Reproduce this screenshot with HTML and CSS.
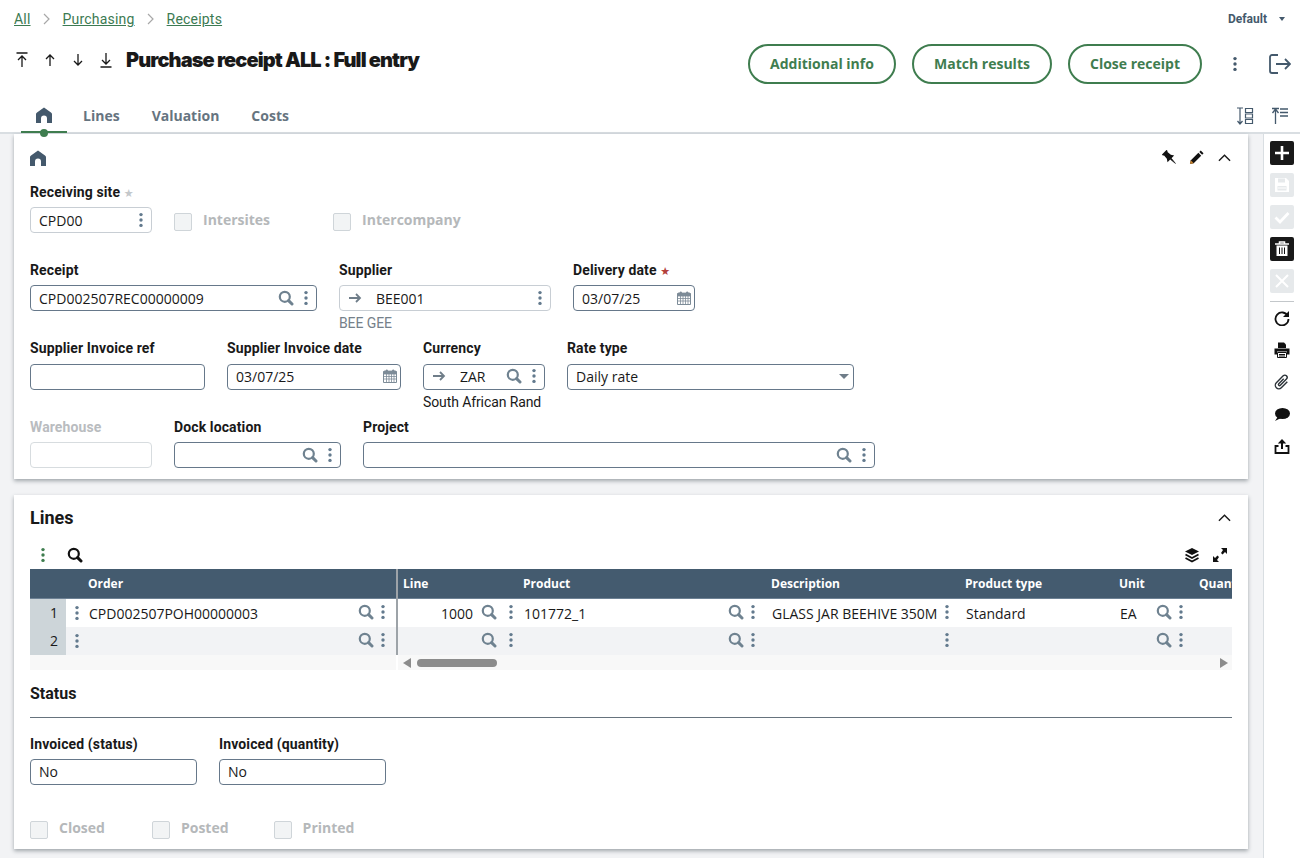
FILE: index.html
```html
<!DOCTYPE html>
<html lang="en">

<head>
    <meta charset="UTF-8" />
    <title>Purchase receipt ALL : Full entry</title>
    <link rel="stylesheet" href="styles.css">
</head>

<body>
    <svg class="sprite" width="0" height="0">
        <symbol id="i-search" viewBox="0 0 16 16">
            <circle cx="6.8" cy="6.8" r="5" fill="none" stroke="currentColor" stroke-width="2.2" />
            <path d="M10.6 10.6 14 14" stroke="currentColor" stroke-width="3" stroke-linecap="round" />
        </symbol>
        <symbol id="i-dots" viewBox="0 0 6 16">
            <circle cx="3" cy="2.6" r="1.7" fill="currentColor" />
            <circle cx="3" cy="8" r="1.7" fill="currentColor" />
            <circle cx="3" cy="13.4" r="1.7" fill="currentColor" />
        </symbol>
        <symbol id="i-home" viewBox="0 0 16 16">
            <path d="M8 0.5 15 5.5c.6.5 1 1 1 2V16h-5v-4.5a3 3 0 0 0-6 0V16H0V7.5c0-1 .4-1.5 1-2Z" fill="currentColor" />
        </symbol>
        <symbol id="i-cal" viewBox="0 0 14 14">
            <path d="M0.5 2.5h13v11h-13Z" fill="#fff" stroke="currentColor" />
            <path d="M1 2h12v3H1ZM3 1h1.5v2H3ZM9.5 1H11v2H9.5ZM3.5 5v8M6 5v8M8.5 5v8M11 5v8M1 7.5h12M1 10h12" fill="currentColor" stroke="currentColor" stroke-width=".8" />
        </symbol>
        <symbol id="i-right" viewBox="0 0 14 12">
            <path d="M1 6h11M8 2l4 4-4 4" fill="none" stroke="currentColor" stroke-width="1.8" />
        </symbol>
    </svg>

    <header class="top">
        <div class="crumb-row">
            <nav class="crumbs">
                <a>All</a>
                <svg class="crumb-sep" viewBox="0 0 8 12"><path d="M1 1l5 5-5 5" fill="none" stroke="currentColor" stroke-width="1.2" /></svg>
                <a>Purchasing</a>
                <svg class="crumb-sep" viewBox="0 0 8 12"><path d="M1 1l5 5-5 5" fill="none" stroke="currentColor" stroke-width="1.2" /></svg>
                <a>Receipts</a>
            </nav>
            <div class="view-pick">Default<span class="caret"></span></div>
        </div>

        <div class="title-row">
            <div class="nav-arrows">
                <svg viewBox="0 0 12 16"><path d="M0.5 1h11M6 15V4M2 8l4-4 4 4" fill="none" stroke="currentColor" stroke-width="1.3" /></svg>
                <svg viewBox="0 0 12 16"><path d="M6 14V3M2 7l4-4 4 4" fill="none" stroke="currentColor" stroke-width="1.3" /></svg>
                <svg viewBox="0 0 12 16"><path d="M6 2v11M2 9l4 4 4-4" fill="none" stroke="currentColor" stroke-width="1.3" /></svg>
                <svg viewBox="0 0 12 16"><path d="M0.5 15h11M6 1v11M2 8l4 4 4-4" fill="none" stroke="currentColor" stroke-width="1.3" /></svg>
            </div>
            <h1>Purchase receipt ALL : Full entry</h1>
            <div class="actions">
                <button class="pill pill-a">Additional info</button>
                <button class="pill pill-b">Match results</button>
                <button class="pill pill-c">Close receipt</button>
                <svg class="more"><use href="#i-dots" /></svg>
                <svg class="logout" viewBox="0 0 22 20"><path d="M9 1H3a2 2 0 0 0-2 2v14a2 2 0 0 0 2 2h6M7 10h14M16 5l5 5-5 5" fill="none" stroke="currentColor" stroke-width="1.8" /></svg>
            </div>
        </div>

        <div class="tab-row">
            <div class="tab tab-on"><svg class="tab-home"><use href="#i-home" /></svg></div>
            <div class="tab">Lines</div>
            <div class="tab">Valuation</div>
            <div class="tab">Costs</div>
            <div class="tab-tools">
                <svg viewBox="0 0 18 18"><path d="M1 1h6M4 1v16M1.5 14 4 17l2.5-3M9.5 1.5h7v4h-7ZM9.5 7h7v4h-7ZM9.5 12.5h7v4h-7Z" fill="none" stroke="currentColor" stroke-width="1.2" /></svg>
                <svg viewBox="0 0 18 18"><path d="M1 1.5h7M4.5 17V2M1.5 6l3-4 3 4M9 2h8M9 5.5h8M9 9h8" fill="none" stroke="currentColor" stroke-width="1.3" /></svg>
            </div>
        </div>
    </header>

    <div class="workspace">
        <main class="content">
            <section class="card card-main">
                <div class="card-head">
                    <svg class="sec-home"><use href="#i-home" /></svg>
                    <div class="card-tools">
                        <svg class="pin" viewBox="0 0 16 16"><g transform="rotate(-45 8 8)"><path d="M4.5 0h7v2h-1l.5 5 2 3H3l2-3 .5-5h-1Z" fill="#111" /><path d="M7.2 10h1.6L8 17Z" fill="#111" stroke="#111" stroke-width=".6" /></g></svg>
                        <svg viewBox="0 0 16 16"><path d="M1 15l1-4 8-8 3 3-8 8Z" fill="#111" /><path d="M11 2l1.5-1.5 3 3L14 5Z" fill="#111" /><path d="M1 15l1-4 3 3Z" fill="#c9822c" /></svg>
                        <svg class="chev" viewBox="0 0 14 8"><path d="M1 7l6-6 6 6" fill="none" stroke="currentColor" stroke-width="1.5" /></svg>
                    </div>
                </div>

                <div class="form-row">
                    <div class="field w122">
                        <label>Receiving site <span class="star star-off">★</span></label>
                        <div class="input input-soft"><span class="val">CPD00</span><svg class="dots"><use href="#i-dots" /></svg></div>
                    </div>
                    <label class="check check-intersites"><span class="box"></span>Intersites</label>
                    <label class="check check-intercompany"><span class="box"></span>Intercompany</label>
                </div>

                <div class="form-row form-row-tall">
                    <div class="field w287">
                        <label>Receipt</label>
                        <div class="input"><span class="val">CPD002507REC00000009</span><svg class="search"><use href="#i-search" /></svg><svg class="dots"><use href="#i-dots" /></svg></div>
                    </div>
                    <div class="field w212">
                        <label>Supplier</label>
                        <div class="input input-soft"><svg class="go"><use href="#i-right" /></svg><span class="val">BEE001</span><svg class="dots"><use href="#i-dots" /></svg></div>
                        <div class="sub sub-grey">BEE GEE</div>
                    </div>
                    <div class="field w122">
                        <label>Delivery date <span class="star">★</span></label>
                        <div class="input"><span class="val">03/07/25</span><svg class="cal"><use href="#i-cal" /></svg></div>
                    </div>
                </div>

                <div class="form-row form-row-snug">
                    <div class="field w175">
                        <label>Supplier Invoice ref</label>
                        <div class="input"></div>
                    </div>
                    <div class="field w174">
                        <label>Supplier Invoice date</label>
                        <div class="input"><span class="val">03/07/25</span><svg class="cal"><use href="#i-cal" /></svg></div>
                    </div>
                    <div class="field w122">
                        <label>Currency</label>
                        <div class="input"><svg class="go"><use href="#i-right" /></svg><span class="val">ZAR</span><svg class="search"><use href="#i-search" /></svg><svg class="dots"><use href="#i-dots" /></svg></div>
                        <div class="sub">South African Rand</div>
                    </div>
                    <div class="field w287">
                        <label>Rate type</label>
                        <div class="input"><span class="val">Daily rate</span><span class="caret caret-select"></span></div>
                    </div>
                </div>

                <div class="form-row form-row-last">
                    <div class="field w122">
                        <label class="label-off">Warehouse</label>
                        <div class="input input-off"></div>
                    </div>
                    <div class="field w167">
                        <label>Dock location</label>
                        <div class="input"><span class="val"></span><svg class="search"><use href="#i-search" /></svg><svg class="dots"><use href="#i-dots" /></svg></div>
                    </div>
                    <div class="field w512">
                        <label>Project</label>
                        <div class="input"><span class="val"></span><svg class="search"><use href="#i-search" /></svg><svg class="dots"><use href="#i-dots" /></svg></div>
                    </div>
                </div>
            </section>

            <section class="card card-lines">
                <div class="lines-head">
                    <h2>Lines</h2>
                    <svg class="chev" viewBox="0 0 14 8"><path d="M1 7l6-6 6 6" fill="none" stroke="currentColor" stroke-width="1.5" /></svg>
                </div>
                <div class="grid-tools">
                    <svg class="dots dots-green"><use href="#i-dots" /></svg>
                    <svg class="search search-black"><use href="#i-search" /></svg>
                    <div class="grid-tools-right">
                        <svg viewBox="0 0 16 16"><path d="M8 1 15 4.5 8 8 1 4.5Z" fill="#111" /><path d="M1.5 7.5 8 11l6.5-3.5M1.5 11 8 14.5 14.5 11" fill="none" stroke="#111" stroke-width="1.8" /></svg>
                        <svg viewBox="0 0 16 16"><path d="M9 1h6v6l-2-2-2.5 2.5-1.5-1.5L11 3ZM7 15H1V9l2 2 2.5-2.5 1.5 1.5L5 13Z" fill="#111" /></svg>
                    </div>
                </div>

                <div class="grid">
                    <div class="frozen">
                        <div class="g-head"><span class="g-order">Order</span></div>
                        <div class="g-row">
                            <div class="g-num">1</div>
                            <svg class="dots"><use href="#i-dots" /></svg>
                            <span class="g-order-val">CPD002507POH00000003</span>
                            <svg class="search"><use href="#i-search" /></svg>
                            <svg class="dots dots-up"><use href="#i-dots" /></svg>
                        </div>
                        <div class="g-row g-row-alt">
                            <div class="g-num">2</div>
                            <svg class="dots"><use href="#i-dots" /></svg>
                            <span class="g-order-val"></span>
                            <svg class="search"><use href="#i-search" /></svg>
                            <svg class="dots dots-up"><use href="#i-dots" /></svg>
                        </div>
                        <div class="g-scroll"></div>
                    </div>
                    <div class="scroller">
                        <div class="g-head cols">
                            <span>Line</span><span>Product</span><span>Description</span><span>Product type</span><span>Unit</span><span>Quantity</span>
                        </div>
                        <div class="g-row cols">
                            <div class="cell cell-line"><span class="num">1000</span><svg class="search"><use href="#i-search" /></svg><svg class="dots dots-up"><use href="#i-dots" /></svg></div>
                            <div class="cell"><span class="txt">101772_1</span><svg class="search"><use href="#i-search" /></svg><svg class="dots dots-up"><use href="#i-dots" /></svg></div>
                            <div class="cell"><span class="txt">GLASS JAR BEEHIVE 350M</span><svg class="dots dots-up"><use href="#i-dots" /></svg></div>
                            <div class="cell"><span class="txt">Standard</span></div>
                            <div class="cell"><span class="txt">EA</span><svg class="search"><use href="#i-search" /></svg><svg class="dots dots-up"><use href="#i-dots" /></svg></div>
                            <div class="cell"></div>
                        </div>
                        <div class="g-row g-row-alt cols">
                            <div class="cell cell-line"><span class="num"></span><svg class="search"><use href="#i-search" /></svg><svg class="dots dots-up"><use href="#i-dots" /></svg></div>
                            <div class="cell"><span class="txt"></span><svg class="search"><use href="#i-search" /></svg><svg class="dots dots-up"><use href="#i-dots" /></svg></div>
                            <div class="cell"><span class="txt"></span><svg class="dots dots-up"><use href="#i-dots" /></svg></div>
                            <div class="cell"></div>
                            <div class="cell"><span class="txt"></span><svg class="search"><use href="#i-search" /></svg><svg class="dots dots-up"><use href="#i-dots" /></svg></div>
                            <div class="cell"></div>
                        </div>
                        <div class="g-scroll g-scroll-bar">
                            <span class="arrow arrow-left"></span>
                            <span class="thumb"></span>
                            <span class="arrow arrow-right"></span>
                        </div>
                    </div>
                </div>

                <h3>Status</h3>
                <div class="form-row form-row-status">
                    <div class="field w167">
                        <label>Invoiced (status)</label>
                        <div class="input"><span class="val">No</span></div>
                    </div>
                    <div class="field w167">
                        <label>Invoiced (quantity)</label>
                        <div class="input"><span class="val">No</span></div>
                    </div>
                </div>
                <div class="status-checks">
                    <label class="check"><span class="box"></span>Closed</label>
                    <label class="check"><span class="box"></span>Posted</label>
                    <label class="check"><span class="box"></span>Printed</label>
                </div>
            </section>
        </main>

        <aside class="side">
            <button class="side-btn"><svg viewBox="0 0 16 16"><path d="M8 1v14M1 8h14" stroke="#fff" stroke-width="2.6" /></svg></button>
            <button class="side-btn side-off"><svg viewBox="0 0 16 16"><path d="M1 1h11l3 3v11H1Z" fill="#fff" /><path d="M4 1.5h7v4H4ZM3.5 9h9v4.5h-9Z" fill="#e6e9eb" /><path d="M4 11h8" stroke="#fff" /></svg></button>
            <button class="side-btn side-off"><svg viewBox="0 0 16 16"><path d="M1.5 8.5 6 13l8.5-9" fill="none" stroke="#fff" stroke-width="2.8" /></svg></button>
            <button class="side-btn"><svg viewBox="0 0 16 16"><path d="M1 3h14M5.5 3V1h5v2" fill="none" stroke="#fff" stroke-width="1.5" /><path d="M2.5 4.5h11V15h-11Z" fill="#fff" /><path d="M5.5 6.5v6.5M8 6.5v6.5M10.5 6.5v6.5" stroke="#111" /></svg></button>
            <button class="side-btn side-off"><svg viewBox="0 0 16 16"><path d="M2 2l12 12M14 2 2 14" stroke="#fff" stroke-width="2" /></svg></button>
            <div class="side-sep"></div>
            <button class="side-icon"><svg viewBox="0 0 16 16"><path d="M13.8 6A6.5 6.5 0 1 0 14.5 9" fill="none" stroke="#111" stroke-width="1.8" /><path d="M15 1v6h-6Z" fill="#111" /></svg></button>
            <button class="side-icon"><svg viewBox="0 0 16 16"><path d="M4 0.5h6l2 2V6H4Z" fill="#111" /><path d="M0.5 6.5h15v6H13V9.5H3v3H.5Z" fill="#111" /><path d="M3.5 10.5h9v5h-9Z" fill="#fff" stroke="#111" /><path d="M5 12.5h6M5 14h6" stroke="#111" /></svg></button>
            <button class="side-icon"><svg viewBox="0 0 16 16"><path transform="rotate(45 8 8)" d="M11.5 4v8.5a3.5 3.5 0 0 1-7 0V2.8a2.3 2.3 0 0 1 4.6 0v8.7a1.1 1.1 0 0 1-2.2 0V4.5" fill="none" stroke="#2b3238" stroke-width="1.4" /></svg></button>
            <button class="side-icon"><svg viewBox="0 0 16 16"><ellipse cx="8.5" cy="7.5" rx="7.5" ry="5.5" fill="#111" /><path d="M4 10.5 1 15l6-3Z" fill="#111" /></svg></button>
            <button class="side-icon"><svg viewBox="0 0 16 16"><path d="M4.5 8H1.5v7h13V8h-3" fill="none" stroke="#111" stroke-width="1.8" /><path d="M8 11V2.5" stroke="#111" stroke-width="2" /><path d="M3.8 5.5 8 1l4.2 4.5Z" fill="#111" /></svg></button>
        </aside>
    </div>
</body>

</html>
```

FILE: styles.css
```css
* {
    padding: 0;
    margin: 0;
    box-sizing: border-box;
}

html,
body {
    height: 858px;
    overflow: hidden;
}

body {
    background: #f2f3f5;
    color: #191919;
    font-family: "Open Sans", sans-serif;
    font-size: 14px;
}

.sprite {
    position: absolute;
}

button {
    font-family: inherit;
    background: none;
    border: none;
}

/* header */
.top {
    height: 134px;
    background: #fff;
    border-bottom: 2px solid #d9dee2;
}

.crumb-row {
    height: 38px;
    padding: 0 15px 0 14px;
    display: flex;
    align-items: center;
    justify-content: space-between;
}

.crumbs {
    display: flex;
    align-items: center;
    gap: 12px;
    font-family: Roboto, sans-serif;
    font-size: 14px;
    letter-spacing: 0.2px;
    color: #3c7a52;
}

.crumbs a {
    text-decoration: underline;
}

.crumb-sep {
    width: 8px;
    height: 12px;
    color: #a8a8a8;
}

.view-pick {
    display: flex;
    align-items: center;
    font-family: Roboto, sans-serif;
    font-size: 12px;
    font-weight: 700;
    color: #44596c;
}

.caret {
    width: 0;
    height: 0;
    margin-left: 12px;
    border-left: 3.5px solid transparent;
    border-right: 3.5px solid transparent;
    border-top: 4px solid #44596c;
}

.title-row {
    height: 44px;
    padding: 0 9px 0 16px;
    display: flex;
    align-items: center;
}

.nav-arrows {
    display: flex;
    gap: 16px;
    color: #191919;
}

.nav-arrows svg {
    width: 12px;
    height: 16px;
}

h1 {
    margin-left: 14px;
    font-family: Inter, sans-serif;
    font-size: 20px;
    font-weight: 900;
    letter-spacing: -0.9px;
    white-space: nowrap;
}

.actions {
    margin-left: auto;
    align-self: flex-start;
    margin-top: 6px;
    display: flex;
    align-items: center;
    gap: 16px;
}

.pill {
    height: 40px;
    padding-bottom: 2px;
    border: 2px solid #3f7d4f;
    border-radius: 20px;
    background: #fff;
    color: #3f7d4f;
    font-size: 14px;
    font-weight: 700;
}

.pill-a {
    width: 148px;
}

.pill-b {
    width: 140px;
}

.pill-c {
    width: 134px;
}

.more {
    width: 6px;
    height: 16px;
    margin-left: 14px;
    color: #44596c;
}

.logout {
    width: 22px;
    height: 20px;
    margin-left: 15px;
    color: #44596c;
}

.tab-row {
    height: 50px;
    padding: 0 10px 0 21px;
    display: flex;
    align-items: flex-start;
}

.tab {
    height: 51px;
    padding: 24px 16px 0;
    line-height: 20px;
    color: #667480;
    font-weight: 700;
    font-size: 14px;
    position: relative;
}

.tab-on {
    width: 46px;
    padding: 25px 15px 0;
    border-bottom: 2px solid #3f7d4f;
}

.tab-on::after {
    content: "";
    position: absolute;
    left: 19px;
    bottom: -6px;
    width: 8px;
    height: 8px;
    border-radius: 50%;
    background: #3f7d4f;
}

.tab-home {
    display: block;
    width: 16px;
    height: 16px;
    color: #44596c;
}

.tab-tools {
    margin-left: auto;
    display: flex;
    gap: 17px;
    padding-top: 25px;
    padding-right: 1px;
    color: #44596c;
}

.tab-tools svg {
    width: 18px;
    height: 18px;
}

/* page body */
.workspace {
    display: flex;
    height: 724px;
}

.content {
    width: 1263px;
    padding: 0 15px 0 14px;
    display: flex;
    flex-direction: column;
    gap: 16px;
}

.card {
    background: #fff;
    padding: 0 16px;
    box-shadow: 0 2px 4px rgba(60, 70, 80, 0.45);
}

.card-head {
    height: 49px;
    display: flex;
    align-items: flex-start;
    justify-content: space-between;
    padding-top: 16px;
}

.sec-home {
    width: 16px;
    height: 16px;
    color: #44596c;
}

.card-tools {
    display: flex;
    align-items: center;
    gap: 14px;
}

.card-tools svg {
    width: 15px;
    height: 15px;
}

.card-tools .pin {
    margin: 0 -2px 0 2px;
}

.card-tools .chev,
.lines-head .chev {
    width: 13px;
    height: 8px;
    color: #191919;
}

.card-tools .chev {
    margin-right: 1px;
}

/* form */
.form-row {
    display: flex;
    gap: 22px;
    height: 78px;
}

.form-row-tall {
    height: 79px;
}

.form-row-last {
    height: 61px;
}

.field label {
    display: block;
    height: 24px;
    font-family: Roboto, sans-serif;
    font-weight: 700;
    font-size: 14px;
    letter-spacing: 0.12px;
    line-height: 18px;
    color: #191919;
}

.form-row-snug .field label {
    line-height: 16px;
}

.field .label-off {
    color: #b9bcbf;
}

.star {
    color: #b3403c;
    font-family: "DejaVu Sans", sans-serif;
    font-size: 11px;
    font-weight: 400;
}

.star-off {
    color: #c4c8cb;
}

.w122 {
    width: 122px;
}

.w167 {
    width: 167px;
}

.w174 {
    width: 174px;
}

.w175 {
    width: 175px;
}

.w212 {
    width: 212px;
}

.w287 {
    width: 287px;
}

.w512 {
    width: 512px;
}

.input {
    height: 26px;
    padding: 0 7px 0 8px;
    display: flex;
    align-items: center;
    border: 1px solid #66788a;
    border-radius: 4px;
    background: #fff;
    font-size: 14px;
}

.form-row-snug .input,
.form-row-status .input {
    padding-bottom: 2px;
}

.input-soft {
    border-color: #c8ced4;
}

.input-off {
    border-color: #d7dcdf;
}

.val {
    flex: 1;
    white-space: nowrap;
}

.dots {
    flex: none;
    width: 6px;
    height: 16px;
    color: #637a8e;
}

.search {
    flex: none;
    width: 16px;
    height: 16px;
    margin-right: 9px;
    color: #6f8290;
}

.cal {
    flex: none;
    width: 14px;
    height: 14px;
    color: #7d8c98;
    margin-right: -4px;
}

.go {
    flex: none;
    width: 14px;
    height: 12px;
    margin-right: 14px;
    color: #6f7d89;
}

.input .caret-select {
    margin: 0 -3px 0 0;
    border-left-width: 5px;
    border-right-width: 5px;
    border-top-width: 5px;
    border-top-color: #6f7d89;
}

.sub {
    margin-top: 3px;
    font-family: Roboto, sans-serif;
    font-size: 14px;
    letter-spacing: -0.1px;
    line-height: 18px;
}

.sub-grey {
    color: #75808a;
}

.check {
    display: flex;
    align-items: flex-start;
    gap: 11px;
    color: #b5b8ba;
    font-weight: 700;
    font-size: 14px;
    line-height: 14px;
    height: 18px;
}

.box {
    width: 18px;
    height: 18px;
    border: 1px solid #cfd5d9;
    border-radius: 2px;
    background: #f2f4f5;
}

.check-intersites {
    margin-top: 30px;
}

.check-intercompany {
    margin: 30px 0 0 41px;
}

/* lines card */
.card-lines {
    height: 354px;
}

.lines-head {
    height: 46px;
    display: flex;
    align-items: center;
    justify-content: space-between;
    padding-bottom: 1px;
}

.lines-head .chev {
    margin-right: 1px;
}

h2 {
    font-family: Roboto, sans-serif;
    font-size: 18px;
    font-weight: 700;
}

.grid-tools {
    height: 28px;
    display: flex;
    align-items: center;
    padding-left: 10px;
}

.dots-green {
    color: #3f7d4f;
}

.search-black {
    margin: 0 0 0 21px;
    color: #111;
}

.grid-tools-right {
    margin-left: auto;
    display: flex;
    gap: 12px;
    padding-right: 4px;
}

.grid-tools-right svg {
    width: 16px;
    height: 16px;
}

.grid {
    display: flex;
    height: 101px;
}

.frozen {
    width: 368px;
    flex: none;
    border-right: 2px solid #9da3a8;
    height: 86px;
}

.frozen .g-scroll {
    width: 366px;
}

.scroller {
    flex: 1;
    overflow: hidden;
}

.g-head {
    height: 30px;
    background: #445b6f;
    color: #fff;
    font-size: 12px;
    font-weight: 700;
    line-height: 30px;
    border-bottom: 1px solid #6d8194;
}

.g-order {
    margin-left: 58px;
}

.g-row {
    height: 28px;
    display: flex;
    align-items: center;
    background: #fff;
    font-size: 14px;
}

.g-row-alt {
    background: #f2f3f5;
}

.g-num {
    width: 36px;
    height: 28px;
    flex: none;
    padding-right: 8px;
    background: #cdd5d9;
    text-align: right;
    line-height: 28px;
    margin-right: 8px;
}

.g-order-val {
    flex: 1;
    margin-left: 9px;
}

.dots-up {
    margin: -3px 10px 0 0;
}

.g-row .search {
    margin: -3px 6px 0 0;
}

.cols {
    display: grid;
    grid-template-columns: 120px 248px 194px 154px 80px 120px;
}

.g-head.cols span {
    padding-left: 5px;
    white-space: nowrap;
}

.cell {
    height: 28px;
    display: flex;
    align-items: center;
    padding-left: 6px;
    min-width: 0;
}

.cell .txt {
    flex: 1;
    white-space: nowrap;
}

.cell-line .num {
    flex: 1;
    text-align: right;
    padding-right: 8px;
}

.cell-line .dots-up {
    margin-right: 4px;
}

.g-row .cell-line .search {
    margin-right: 11px;
}

.g-scroll {
    height: 15px;
    background: #f8f8f8;
}

.g-scroll-bar {
    display: flex;
    align-items: center;
    padding-left: 5px;
    position: relative;
}

.thumb {
    width: 80px;
    height: 8px;
    margin-left: 6px;
    border-radius: 4px;
    background: #8c8c8c;
}

.arrow {
    width: 0;
    height: 0;
    border-top: 5px solid transparent;
    border-bottom: 5px solid transparent;
}

.arrow-left {
    border-right: 8px solid #8c8c8c;
}

.arrow-right {
    position: absolute;
    right: 4px;
    border-left: 8px solid #8c8c8c;
}

h3 {
    height: 39px;
    margin-top: 9px;
    border-bottom: 1px solid #66737d;
    font-family: Roboto, sans-serif;
    font-size: 16px;
    font-weight: 700;
    line-height: 30px;
}

.form-row-status {
    margin-top: 17px;
    height: 50px;
}

.status-checks {
    display: flex;
    gap: 47px;
    margin-top: 36px;
}

.status-checks .check:last-child {
    margin-left: -2px;
}

/* right toolbar */
.side {
    width: 37px;
    height: 724px;
    padding: 7px 6px;
    display: flex;
    flex-direction: column;
    gap: 8px;
    background: #fff;
    border-left: 1px solid #d9dee2;
}

.side-btn,
.side-icon {
    width: 24px;
    height: 24px;
    flex: none;
    display: flex;
    align-items: center;
    justify-content: center;
}

.side-btn {
    background: #191919;
    border-radius: 2px;
}

.side-off {
    background: #e6e9eb;
}

.side-btn svg,
.side-icon svg {
    width: 16px;
    height: 16px;
}

.side-sep {
    height: 1px;
    margin-bottom: -4px;
    background: #c3c7ca;
}
```
